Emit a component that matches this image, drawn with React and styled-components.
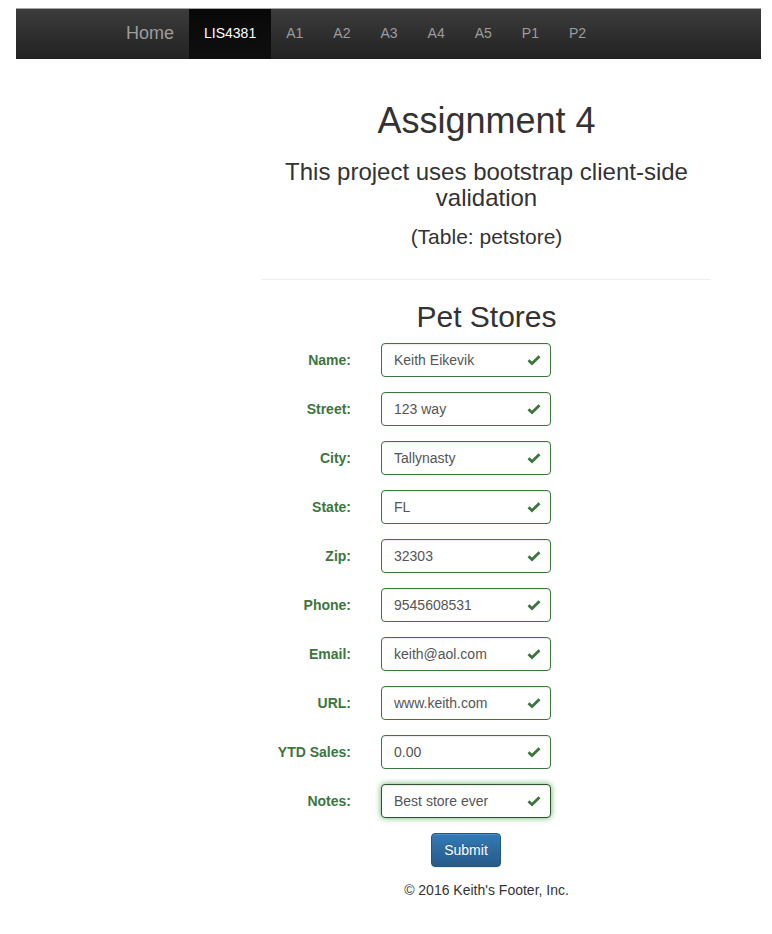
import React from 'react'
import styled, { createGlobalStyle } from 'styled-components'

const GlobalStyle = createGlobalStyle`
  body {
    margin: 0;
    background: #fff;
    font-family: "Liberation Sans", Arial, sans-serif;
    font-size: 14px;
    line-height: 1.42857;
    color: #333;
  }
`

const Page = styled.div`
  padding: 8px 11px 20px 16px;
`
const Navbar = styled.nav`
  display: flex;
  height: 50px;
  border-top: 1px solid #a8a8a8;
  background-image: linear-gradient(to bottom, #3c3c3c 0, #222 100%);
  padding-left: 95px;
`
const Brand = styled.a`
  display: flex;
  align-items: center;
  padding: 0 15px;
  font-size: 18px;
  color: #9d9d9d;
  text-decoration: none;
`
const NavLink = styled.a`
  display: flex;
  align-items: center;
  padding: 0 15px;
  font-size: 14px;
  text-decoration: none;
  color: ${p => (p.$active ? '#fff' : '#9d9d9d')};
  background: ${p => (p.$active ? 'linear-gradient(to bottom, #080808 0, #0f0f0f 100%)' : 'transparent')};
`
const Main = styled.main`
  width: 449px;
  margin-left: 246px;
  text-align: center;
`
const Title = styled.h1`
  margin: 42px 0 0;
  font-size: 36px;
  font-weight: 500;
  line-height: 1.1;
`
const Subtitle = styled.h3`
  margin: 18px 0 0;
  font-size: 24px;
  font-weight: 500;
  line-height: 1.1;
`
const TableNote = styled.h4`
  margin: 14px 0 0;
  font-size: 21px;
  font-weight: 500;
  line-height: 1.1;
`
const Rule = styled.hr`
  margin: 31px 0 0;
  border: 0;
  border-top: 1px solid #eee;
`
const FormTitle = styled.h2`
  margin: 20px 0 0;
  font-size: 30px;
  font-weight: 500;
  line-height: 1.1;
`
const Form = styled.form`
  display: grid;
  grid-template-columns: 89px 170px;
  column-gap: 30px;
  row-gap: 15px;
  margin-top: 10px;
  text-align: left;
`
const Label = styled.label`
  align-self: center;
  padding-top: 1px;
  text-align: right;
  font-weight: bold;
  color: #3c763d;
`
const Field = styled.div`
  position: relative;
  height: 34px;
`
const Input = styled.input`
  box-sizing: border-box;
  width: 100%;
  height: 34px;
  padding: 6px 34px 6px 12px;
  font-family: inherit;
  font-size: 14px;
  color: #555;
  background: #fff;
  border: 1px solid ${p => (p.$focus ? '#2b542c' : '#3c763d')};
  border-radius: 4px;
  outline: none;
  box-shadow: ${p => (p.$focus
    ? 'inset 0 1px 1px rgba(0,0,0,.075), 0 0 6px #67b168'
    : 'inset 0 1px 1px rgba(0,0,0,.075)')};
`
const Feedback = styled.span`
  position: absolute;
  top: 0;
  right: 0;
  width: 34px;
  height: 34px;
  display: flex;
  align-items: center;
  justify-content: center;
  pointer-events: none;
`
const Actions = styled.div`
  grid-column: 2;
  display: flex;
  justify-content: center;
`
const SubmitBtn = styled.button`
  height: 34px;
  padding: 6px 12px;
  font-family: inherit;
  font-size: 14px;
  color: #fff;
  border: 1px solid #245580;
  border-radius: 4px;
  background-image: linear-gradient(to bottom, #337ab7 0, #265a88 100%);
  box-shadow: inset 0 1px 0 rgba(255,255,255,.15), 0 1px 1px rgba(0,0,0,.075);
  text-shadow: 0 -1px 0 rgba(0,0,0,.2);
`
const Footer = styled.footer`
  margin-top: 13px;
  line-height: 20px;
  text-align: center;
`

const Check = () => (
  <svg width="14" height="12" viewBox="0 0 14 12">
    <path d="M1.5 6.2 L5 9.6 L12.5 2.2" fill="none" stroke="#3c763d" strokeWidth="2.8" />
  </svg>
)

const links = ['A1', 'A2', 'A3', 'A4', 'A5', 'P1', 'P2']

const fields = [
  ['Name:', 'Keith Eikevik'],
  ['Street:', '123 way'],
  ['City:', 'Tallynasty'],
  ['State:', 'FL'],
  ['Zip:', '32303'],
  ['Phone:', '9545608531'],
  ['Email:', 'keith@aol.com'],
  ['URL:', 'www.keith.com'],
  ['YTD Sales:', '0.00'],
  ['Notes:', 'Best store ever'],
]

const App = () => {
  return (
    <Page>
      <GlobalStyle />
      <Navbar>
        <Brand href="#">Home</Brand>
        <NavLink href="#" $active>LIS4381</NavLink>
        {links.map(l => <NavLink key={l} href="#">{l}</NavLink>)}
      </Navbar>
      <Main>
        <Title>Assignment 4</Title>
        <Subtitle>This project uses bootstrap client-side validation</Subtitle>
        <TableNote>(Table: petstore)</TableNote>
        <Rule />
        <FormTitle>Pet Stores</FormTitle>
        <Form onSubmit={e => e.preventDefault()}>
          {fields.map(([label, value], i) => (
            <React.Fragment key={label}>
              <Label>{label}</Label>
              <Field>
                <Input defaultValue={value} $focus={i === fields.length - 1} />
                <Feedback><Check /></Feedback>
              </Field>
            </React.Fragment>
          ))}
          <Actions>
            <SubmitBtn type="submit">Submit</SubmitBtn>
          </Actions>
        </Form>
        <Footer>© 2016 Keith's Footer, Inc.</Footer>
      </Main>
    </Page>
  )
}

export default App
